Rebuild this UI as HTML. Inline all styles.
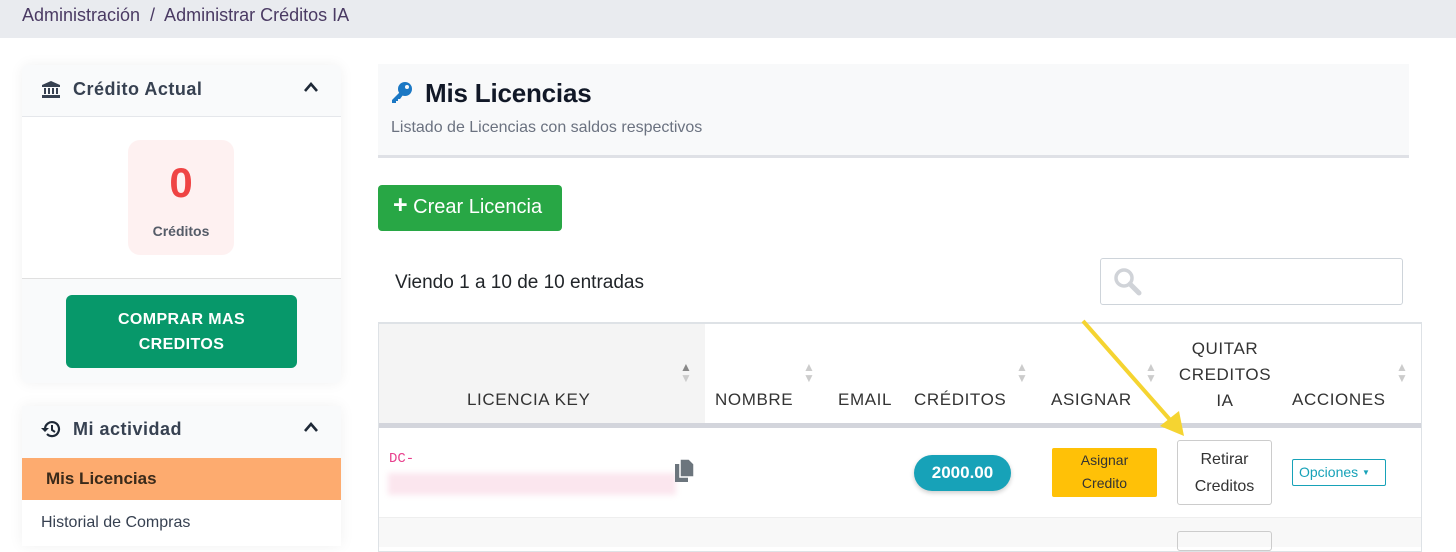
<!DOCTYPE html>
<html><head><meta charset="utf-8"><style>
*{box-sizing:border-box;margin:0;padding:0}
body{width:1456px;height:538px;overflow:hidden;background:#fff;font-family:"Liberation Sans",sans-serif;position:relative;color:#212529}
.a{position:absolute}
.h{font-size:17px;color:#333;letter-spacing:.6px}
.s{font-size:12px;line-height:11px;color:#ccc}
</style></head><body>
<div class="a" style="left:0;top:0;width:1456px;height:38px;background:#e9ebef"></div>
<div class="a" style="left:22px;top:5px;font-size:18px;color:#4a3a63">Administración &nbsp;/&nbsp; Administrar Créditos IA</div>

<div class="a" style="left:22px;top:65px;width:319px;height:318px;background:#f9fafb;box-shadow:0 0 14px rgba(0,0,0,.06);border-radius:6px"></div>
<div class="a" style="left:22px;top:116px;width:319px;height:163px;background:#fff;border-top:1px solid #e5e7eb;border-bottom:1px solid #e0e0e0"></div>
<svg class="a" style="left:42px;top:81px" width="18" height="17" viewBox="0 0 18 17"><path d="M9 0L0 4v2h18V4z M2 7h2v6H2z M6 7h2v6H6z M10 7h2v6h-2z M14 7h2v6h-2z M0 14h18v3H0z" fill="#374151"/></svg>
<div class="a" style="left:73px;top:79px;font-size:18px;font-weight:bold;color:#374151;letter-spacing:.5px">Crédito Actual</div>
<svg class="a" style="left:303px;top:81px" width="16" height="12"><path d="M2 10L8 3l6 7" stroke="#1f2937" stroke-width="2.6" fill="none"/></svg>
<div class="a" style="left:128px;top:140px;width:106px;height:115px;background:#fef1f1;border-radius:12px;text-align:center">
<div style="font-size:42px;font-weight:bold;color:#ef4444;margin-top:19px;line-height:48px">0</div>
<div style="font-size:14px;font-weight:bold;color:#555c68;margin-top:16px">Créditos</div></div>
<div class="a" style="left:66px;top:295px;width:231px;height:73px;background:#07986a;border-radius:6px;color:#fff;font-weight:bold;font-size:16px;text-align:center;line-height:25px;padding-top:12px;letter-spacing:.4px">COMPRAR MAS<br>CREDITOS</div>

<div class="a" style="left:22px;top:406px;width:319px;height:140px;background:#fff;box-shadow:0 0 14px rgba(0,0,0,.06)"></div>
<div class="a" style="left:22px;top:406px;width:319px;height:52px;background:#f9fafb"></div>
<svg class="a" style="left:41px;top:420px" width="20" height="18" viewBox="0 0 20 18"><path d="M4 9a7 7 0 1 1 2 5" stroke="#1f2937" stroke-width="2.2" fill="none"/><path d="M0 8l4 4 4-4z" fill="#1f2937"/><path d="M11 5v5l3 2" stroke="#1f2937" stroke-width="2" fill="none"/></svg>
<div class="a" style="left:73px;top:419px;font-size:18px;font-weight:bold;color:#374151;letter-spacing:.5px">Mi actividad</div>
<svg class="a" style="left:303px;top:421px" width="16" height="12"><path d="M2 10L8 3l6 7" stroke="#1f2937" stroke-width="2.6" fill="none"/></svg>
<div class="a" style="left:22px;top:458px;width:319px;height:42px;background:#fdab6f;font-weight:bold;font-size:17px;color:#3a2a1a;padding:11px 0 0 24px">Mis Licencias</div>
<div class="a" style="left:41px;top:514px;font-size:16px;color:#374151">Historial de Compras</div>

<div class="a" style="left:378px;top:64px;width:1031px;height:94px;background:#f8f9fa;border-bottom:3px solid #dfe1e6"></div>
<svg class="a" style="left:390px;top:80px" width="24" height="24" viewBox="0 0 24 24"><circle cx="15" cy="9" r="7" fill="#1b78c4"/><circle cx="17" cy="7" r="2" fill="#f8f9fa"/><path d="M10 12L2 20v3h4v-2h2v-2h2l3-4z" fill="#1b78c4"/></svg>
<div class="a" style="left:425px;top:78px;font-size:26px;font-weight:bold;color:#111827;letter-spacing:-.2px">Mis Licencias</div>
<div class="a" style="left:391px;top:119px;font-size:16px;color:#6b7280">Listado de Licencias con saldos respectivos</div>

<div class="a" style="left:378px;top:185px;width:184px;height:46px;background:#28a745;border-radius:4px;color:#fff;font-size:20px;padding:11px 0 0 15px;white-space:nowrap"><b style="font-size:25px;line-height:16px">+</b> Crear Licencia</div>
<div class="a" style="left:395px;top:272px;font-size:19px;color:#212529">Viendo 1 a 10 de 10 entradas</div>
<div class="a" style="left:1100px;top:258px;width:303px;height:47px;border:1px solid #ced4da;border-radius:3px"></div>
<svg class="a" style="left:1112px;top:266px" width="32" height="30"><circle cx="12" cy="12" r="8" stroke="#d0d3d8" stroke-width="3.5" fill="none"/><path d="M18 18l9 9" stroke="#d0d3d8" stroke-width="5" stroke-linecap="round"/></svg>

<div class="a" style="left:378px;top:322px;width:1044px;height:230px;border:1px solid #dee2e6;border-top:2px solid #dee2e6"></div>
<div class="a" style="left:379px;top:324px;width:326px;height:100px;background:#f4f4f4"></div>
<div class="a" style="left:379px;top:423px;width:1042px;height:5px;background:#d3d5dc"></div>
<div class="a" style="left:379px;top:517px;width:1042px;height:30px;background:#f8f8f8;border-top:1px solid #eee"></div>
<div class="a h" style="top:390px;left:467px">LICENCIA KEY</div>
<div class="a h" style="top:390px;left:715px">NOMBRE</div>
<div class="a h" style="top:390px;left:838px">EMAIL</div>
<div class="a h" style="top:390px;left:914px">CRÉDITOS</div>
<div class="a h" style="top:390px;left:1051px">ASIGNAR</div>
<div class="a h" style="top:336px;left:1168px;width:114px;text-align:center;line-height:26px">QUITAR<br>CREDITOS<br>IA</div>
<div class="a h" style="top:390px;left:1292px">ACCIONES</div>
<div class="a s" style="left:680px;top:362px"><span style="color:#888">▲</span><br>▼</div>
<div class="a s" style="left:803px;top:362px">▲<br>▼</div>
<div class="a s" style="left:1016px;top:362px">▲<br>▼</div>
<div class="a s" style="left:1145px;top:362px">▲<br>▼</div>
<div class="a s" style="left:1396px;top:362px">▲<br>▼</div>

<div class="a" style="left:389px;top:451px;font-family:'Liberation Mono',monospace;font-size:14px;color:#e83e8c">DC-</div>
<div class="a" style="left:388px;top:473px;width:288px;height:22px;background:#fbe6ee;filter:blur(3px)"></div>
<svg class="a" style="left:674px;top:458px" width="22" height="26" viewBox="0 0 22 26"><rect x="1" y="6" width="13" height="18" fill="#6c757d"/><path d="M6 1h9l5 5v13H6z" fill="#6c757d" stroke="#fff" stroke-width="1.5"/></svg>
<div class="a" style="left:914px;top:455px;width:97px;height:36px;background:#17a2b8;border-radius:18px;color:#fff;font-weight:bold;font-size:17px;text-align:center;line-height:36px;box-shadow:0 2px 5px rgba(0,0,0,.2)">2000.00</div>
<div class="a" style="left:1052px;top:448px;width:105px;height:49px;background:#ffc107;border-radius:2px;font-size:14px;color:#333;text-align:center;line-height:23px;padding-top:1px">Asignar<br>Credito</div>
<div class="a" style="left:1177px;top:440px;width:95px;height:65px;border:1px solid #ccc;border-radius:3px;font-size:16px;color:#333;text-align:center;line-height:27px;padding-top:5px">Retirar<br>Creditos</div>
<div class="a" style="left:1177px;top:531px;width:95px;height:20px;border:1px solid #ccc;border-radius:3px"></div>
<div class="a" style="left:1292px;top:459px;width:94px;height:27px;border:1px solid #17a2b8;border-radius:2px;font-size:14px;color:#17a2b8;padding:4px 0 0 6px">Opciones <span style="font-size:8px;vertical-align:2px">▼</span></div>

<svg class="a" style="left:0;top:0" width="1456" height="538"><line x1="1083" y1="321" x2="1172" y2="422" stroke="#f5d431" stroke-width="4"/><path d="M1160 426l24 10-5-25z" fill="#f5d431"/></svg>
</body></html>
